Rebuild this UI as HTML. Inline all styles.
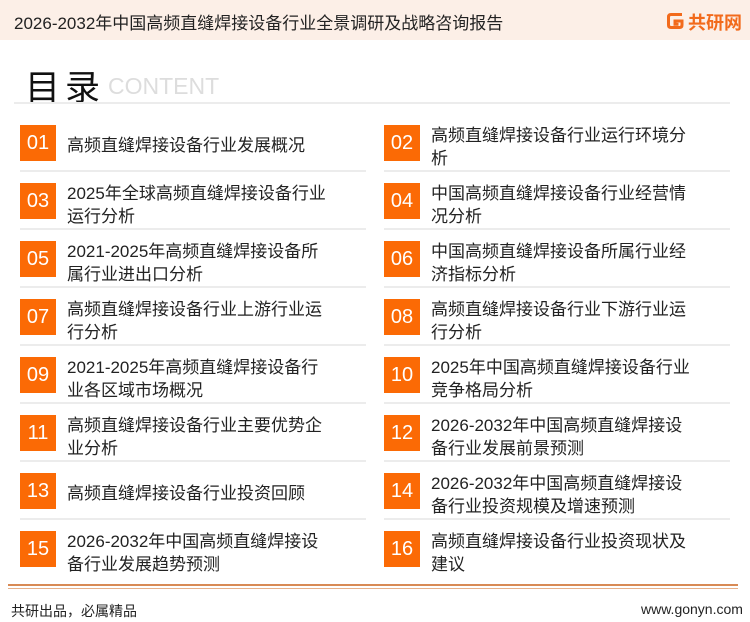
<!DOCTYPE html>
<html><head><meta charset="utf-8"><style>
*{margin:0;padding:0;box-sizing:border-box}
body{width:750px;height:622px;background:#fff;font-family:"Liberation Sans","Noto Sans CJK SC",sans-serif;position:relative;overflow:hidden;color:#222}
.hdr{position:absolute;left:0;top:0;width:750px;height:40px;background:#fcefe7}
.hdr .t{position:absolute;left:14px;top:9px;font-size:17px;color:#222;white-space:nowrap}
.logo{position:absolute;left:667px;top:9px;font-size:18px;font-weight:bold;color:#f26a1b;white-space:nowrap}
.logo svg{position:absolute;left:0;top:3px}
.logo span{margin-left:21px}
.ml{position:absolute;left:25px;top:60px;font-size:35px;color:#111;letter-spacing:5px}
.ct{position:absolute;left:108px;top:73px;font-size:23px;color:#ddd;font-family:"Liberation Sans",sans-serif}
.hl{position:absolute;left:14px;top:102px;width:716px;height:2px;background:#ececec}
.it{position:absolute;width:346px;height:46px}
.it .n{position:absolute;left:0;top:0;width:36px;height:36px;background:#fb6a05;color:#fff;font-size:20px;line-height:36px;text-align:center}
.it .x{position:absolute;left:47px;top:-1px;font-size:17px;line-height:23px;color:#222;white-space:nowrap}
.it .x.one{top:9px}
.it .s{position:absolute;left:0;top:45px;width:346px;height:2px;background:#ececec}
.fl1{position:absolute;left:8px;top:584px;width:730px;height:2px;background:#d88a55}
.fl2{position:absolute;left:8px;top:588px;width:730px;height:1px;background:#e6b08a}
.ft{position:absolute;left:11px;top:601px;font-size:14px;color:#222}
.fr{position:absolute;left:641px;top:601px;font-size:14px;color:#222}
</style></head><body>
<div class="hdr"><div class="t">2026-2032年中国高频直缝焊接设备行业全景调研及战略咨询报告</div>
<div class="logo"><svg width="17" height="18" viewBox="0 0 17 18"><path d="M15 2.5H4Q1.5 2.5 1.5 5v8q0 2.5 2.5 2.5h8.5q2.5 0 2.5-2.5V9H8v3.2h3.5" fill="none" stroke="#f26a1b" stroke-width="3"/></svg><span>共研网</span></div></div>
<div class="ml">目录</div><div class="ct">CONTENT</div>
<div class="hl"></div>

<div class="it" style="left:20px;top:125px"><div class="n">01</div><div class="x one">高频直缝焊接设备行业发展概况</div><div class="s"></div></div>
<div class="it" style="left:384px;top:125px"><div class="n">02</div><div class="x">高频直缝焊接设备行业运行环境分<br>析</div><div class="s"></div></div>
<div class="it" style="left:20px;top:183px"><div class="n">03</div><div class="x">2025年全球高频直缝焊接设备行业<br>运行分析</div><div class="s"></div></div>
<div class="it" style="left:384px;top:183px"><div class="n">04</div><div class="x">中国高频直缝焊接设备行业经营情<br>况分析</div><div class="s"></div></div>
<div class="it" style="left:20px;top:241px"><div class="n">05</div><div class="x">2021-2025年高频直缝焊接设备所<br>属行业进出口分析</div><div class="s"></div></div>
<div class="it" style="left:384px;top:241px"><div class="n">06</div><div class="x">中国高频直缝焊接设备所属行业经<br>济指标分析</div><div class="s"></div></div>
<div class="it" style="left:20px;top:299px"><div class="n">07</div><div class="x">高频直缝焊接设备行业上游行业运<br>行分析</div><div class="s"></div></div>
<div class="it" style="left:384px;top:299px"><div class="n">08</div><div class="x">高频直缝焊接设备行业下游行业运<br>行分析</div><div class="s"></div></div>
<div class="it" style="left:20px;top:357px"><div class="n">09</div><div class="x">2021-2025年高频直缝焊接设备行<br>业各区域市场概况</div><div class="s"></div></div>
<div class="it" style="left:384px;top:357px"><div class="n">10</div><div class="x">2025年中国高频直缝焊接设备行业<br>竞争格局分析</div><div class="s"></div></div>
<div class="it" style="left:20px;top:415px"><div class="n">11</div><div class="x">高频直缝焊接设备行业主要优势企<br>业分析</div><div class="s"></div></div>
<div class="it" style="left:384px;top:415px"><div class="n">12</div><div class="x">2026-2032年中国高频直缝焊接设<br>备行业发展前景预测</div><div class="s"></div></div>
<div class="it" style="left:20px;top:473px"><div class="n">13</div><div class="x one">高频直缝焊接设备行业投资回顾</div><div class="s"></div></div>
<div class="it" style="left:384px;top:473px"><div class="n">14</div><div class="x">2026-2032年中国高频直缝焊接设<br>备行业投资规模及增速预测</div><div class="s"></div></div>
<div class="it" style="left:20px;top:531px"><div class="n">15</div><div class="x">2026-2032年中国高频直缝焊接设<br>备行业发展趋势预测</div></div>
<div class="it" style="left:384px;top:531px"><div class="n">16</div><div class="x">高频直缝焊接设备行业投资现状及<br>建议</div></div>

<div class="fl1"></div><div class="fl2"></div>
<div class="ft">共研出品，必属精品</div>
<div class="fr">www.gonyn.com</div>
</body></html>
